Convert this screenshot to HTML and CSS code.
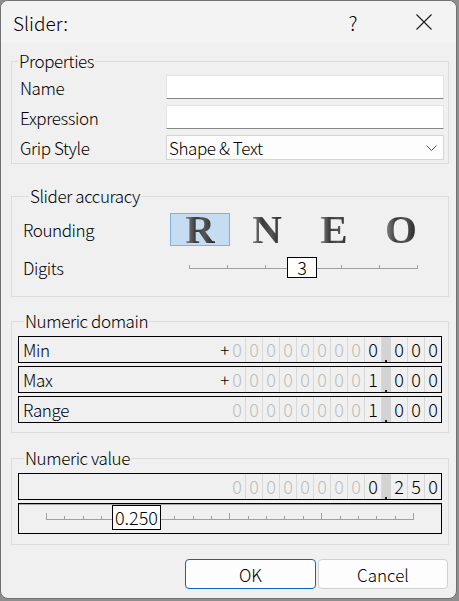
FILE: index.html
```html
<!DOCTYPE html>
<html>

<head>
  <link rel="stylesheet" href="styles.css">
</head>

<body>
  <div class="window">
    <div class="titlebar">
      <span class="title">Slider:</span>
      <span class="help">?</span>
      <svg class="close" width="16" height="16" viewBox="0 0 16 16">
        <path d="M0.5 0.5L15.5 15.5M15.5 0.5L0.5 15.5" stroke="#1a1a1a" stroke-width="1.1" fill="none" />
      </svg>
    </div>

    <div class="content">
      <fieldset class="group group-props">
        <legend>Properties</legend>
        <div class="props-grid">
          <label>Name</label>
          <div class="field"></div>
          <label>Expression</label>
          <div class="field"></div>
          <label>Grip Style</label>
          <div class="select">
            <span>Shape &amp; Text</span>
            <svg width="11" height="6" viewBox="0 0 11 6">
              <path d="M0.5 0.5L5.5 5.5L10.5 0.5" stroke="#555" stroke-width="1" fill="none" />
            </svg>
          </div>
        </div>
      </fieldset>

      <fieldset class="group group-accuracy">
        <legend>Slider accuracy</legend>
        <div class="acc-row">
          <span class="acc-label">Rounding</span>
          <div class="round-opts">
            <div class="round-opt selected"><span>R</span></div>
            <div class="round-opt"><span>N</span></div>
            <div class="round-opt"><span>E</span></div>
            <div class="round-opt"><span>O</span></div>
          </div>
        </div>
        <div class="acc-row digits-row">
          <span class="acc-label digits-label">Digits</span>
          <div class="digit-slider">
            <div class="ticks">
              <i></i><i></i><i></i><i></i><i></i><i></i><i></i>
            </div>
            <div class="thumb digit-thumb">3</div>
          </div>
        </div>
      </fieldset>

      <fieldset class="group group-domain">
        <legend>Numeric domain</legend>
        <div class="num-row">
          <span class="num-label">Min</span>
          <span class="sign">+</span>
          <span class="cell">0</span><span class="cell">0</span><span class="cell">0</span><span class="cell">0</span><span class="cell">0</span><span class="cell">0</span><span class="cell">0</span><span class="cell">0</span><span class="cell on">0</span>
          <span class="dec"></span>
          <span class="cell on">0</span><span class="cell on">0</span><span class="cell on last">0</span>
        </div>
        <div class="num-row">
          <span class="num-label">Max</span>
          <span class="sign">+</span>
          <span class="cell">0</span><span class="cell">0</span><span class="cell">0</span><span class="cell">0</span><span class="cell">0</span><span class="cell">0</span><span class="cell">0</span><span class="cell">0</span><span class="cell on">1</span>
          <span class="dec"></span>
          <span class="cell on">0</span><span class="cell on">0</span><span class="cell on last">0</span>
        </div>
        <div class="num-row">
          <span class="num-label">Range</span>
          <span class="sign"></span>
          <span class="cell">0</span><span class="cell">0</span><span class="cell">0</span><span class="cell">0</span><span class="cell">0</span><span class="cell">0</span><span class="cell">0</span><span class="cell">0</span><span class="cell on">1</span>
          <span class="dec"></span>
          <span class="cell on">0</span><span class="cell on">0</span><span class="cell on last">0</span>
        </div>
      </fieldset>

      <fieldset class="group group-value">
        <legend>Numeric value</legend>
        <div class="num-row">
          <span class="num-label"></span>
          <span class="sign"></span>
          <span class="cell">0</span><span class="cell">0</span><span class="cell">0</span><span class="cell">0</span><span class="cell">0</span><span class="cell">0</span><span class="cell">0</span><span class="cell">0</span><span class="cell on">0</span>
          <span class="dec"></span>
          <span class="cell on">2</span><span class="cell on">5</span><span class="cell on last">0</span>
        </div>
        <div class="value-slider">
          <div class="ticks value-ticks">
            <i class="major"></i><i></i><i></i><i></i><i></i>
            <i class="major"></i><i></i><i></i><i></i><i></i>
            <i class="major"></i><i></i><i></i><i></i><i></i>
            <i class="major"></i><i></i><i></i><i></i><i></i>
            <i class="major"></i>
          </div>
          <div class="thumb value-thumb">0.250</div>
        </div>
      </fieldset>

      <div class="buttons">
        <button class="btn default">OK</button>
        <button class="btn">Cancel</button>
      </div>
    </div>
  </div>
</body>

</html>
```

FILE: styles.css
```css
* {
  margin: 0;
  padding: 0;
  box-sizing: border-box;
}

html,
body {
  width: 459px;
  height: 601px;
  overflow: hidden;
}

body {
  background: #8e8e8e;
  font-family: "Noto Sans CJK JP", "Liberation Sans", sans-serif;
  font-weight: 300;
  font-size: 17px;
  letter-spacing: -0.4px;
  color: #000;
}

.window {
  width: 457px;
  height: 599px;
  border: 1px solid #707070;
  border-radius: 8px;
  background: #f0f0f0;
  overflow: hidden;
}

/* title bar */

.titlebar {
  display: flex;
  align-items: center;
  height: 42px;
  padding: 0 24px 0 12px;
  background: #f3f3f3;
  font-size: 19px;
  letter-spacing: 0;
}

.titlebar .title {
  flex: 1;
}

.titlebar .help {
  width: 16px;
  margin-right: 55px;
  text-align: center;
  font-size: 20px;
}

.content {
  padding: 0 7px 0 10px;
}

/* group boxes */

.group {
  border: 1px solid #dcdcdc;
  padding: 0;
}

.group legend {
  margin-left: 6px;
  padding: 0 1px;
  line-height: 18px;
}

.group-props {
  margin-top: 9px;
}

.group-accuracy {
  margin-top: 23px;
  padding: 8px 0 16px 11px;
}

.group-domain {
  margin-top: 15px;
  padding: 6px 6px 9px 6px;
}

.group-value {
  margin-top: 16px;
  padding: 6px 6px 10px 6px;
}

/* properties */

.props-grid {
  display: grid;
  grid-template-columns: 146px 1fr;
  grid-template-rows: 24px 24px 25px;
  row-gap: 6px;
  align-items: center;
  padding: 5px 4px 3px 8px;
}

.field {
  height: 24px;
  background: #fff;
  border: 1px solid #e4e4e4;
  border-bottom-color: #868686;
}

.select {
  display: flex;
  align-items: center;
  height: 25px;
  padding-left: 2px;
  background: #fdfdfd;
  border: 1px solid #d4d4d4;
}

.select svg {
  margin-left: auto;
  margin-right: 6px;
}

/* slider accuracy */

.acc-row {
  display: flex;
  align-items: center;
  height: 33px;
}

.acc-label {
  width: 147px;
}

.round-opts {
  display: flex;
  gap: 7px;
}

.round-opt {
  display: flex;
  align-items: center;
  justify-content: center;
  width: 60px;
  height: 33px;
  border: 1px solid transparent;
}

.round-opt span {
  font-family: "Liberation Serif", serif;
  font-weight: bold;
  font-size: 41px;
  line-height: 1;
  letter-spacing: 0;
  background: linear-gradient(90deg, #8a8a8a 0%, #3a3a3a 35%, #555 65%, #222 100%);
  -webkit-background-clip: text;
  background-clip: text;
  color: transparent;
}

.round-opt.selected {
  background: #c5dcf1;
  border-color: #80b2de;
}

.digits-row {
  height: 26px;
  margin-top: 8px;
}

.digits-label {
  width: 166px;
}

.digit-slider {
  position: relative;
  width: 229px;
  height: 26px;
}

.ticks {
  display: flex;
  justify-content: space-between;
  align-items: flex-end;
  height: 15px;
  border-bottom: 1px solid #a0a0a0;
}

.ticks i {
  width: 1px;
  height: 3px;
  background: #a0a0a0;
}

.ticks i.major {
  height: 6px;
}

.thumb {
  position: absolute;
  background: #fff;
  border: 1px solid #000;
  text-align: center;
  font-size: 18px;
  letter-spacing: 0;
}

.digit-thumb {
  left: 98px;
  top: 3px;
  width: 30px;
  height: 21px;
  line-height: 19px;
}

/* numeric rows */

.num-row {
  display: flex;
  height: 27px;
  border: 1px solid #000;
  line-height: 25px;
}

.num-row + .num-row {
  margin-top: 3px;
}

.num-label {
  flex: 1;
  padding-left: 4px;
}

.sign {
  width: 12px;
  text-align: right;
}

.cell {
  width: 17px;
  border-right: 1px solid #d8d8d8;
  text-align: center;
  color: #bcbcbc;
  font-size: 18px;
  letter-spacing: 0;
}

.cell.on {
  color: #000;
}

.cell.last {
  width: 16px;
  border-right: none;
}

.dec {
  position: relative;
  width: 9px;
  background: #d3d3d3;
}

.dec::after {
  content: "";
  position: absolute;
  left: 3px;
  bottom: 0;
  width: 2px;
  height: 2px;
  background: #222;
}

/* value slider */

.value-slider {
  position: relative;
  height: 31px;
  margin-top: 3px;
  border: 1px solid #000;
  box-shadow: inset 0 1px 0 #a8a8a8;
}

.value-ticks {
  width: 368px;
  height: 7px;
  margin: 9px 0 0 27px;
}

.value-thumb {
  left: 93px;
  top: 1px;
  width: 49px;
  height: 25px;
  line-height: 23px;
}

/* buttons */

.buttons {
  display: flex;
  justify-content: flex-end;
  gap: 2px;
  margin-top: 14px;
  padding-right: 1px;
}

.btn {
  width: 130px;
  height: 30px;
  background: #fdfdfd;
  border: 1px solid #d0d0d0;
  border-radius: 4px;
  font-family: inherit;
  font-weight: 300;
  font-size: 17px;
  letter-spacing: 0;
  color: #000;
}

.btn.default {
  width: 131px;
  border-color: #0a64c2;
}
```
